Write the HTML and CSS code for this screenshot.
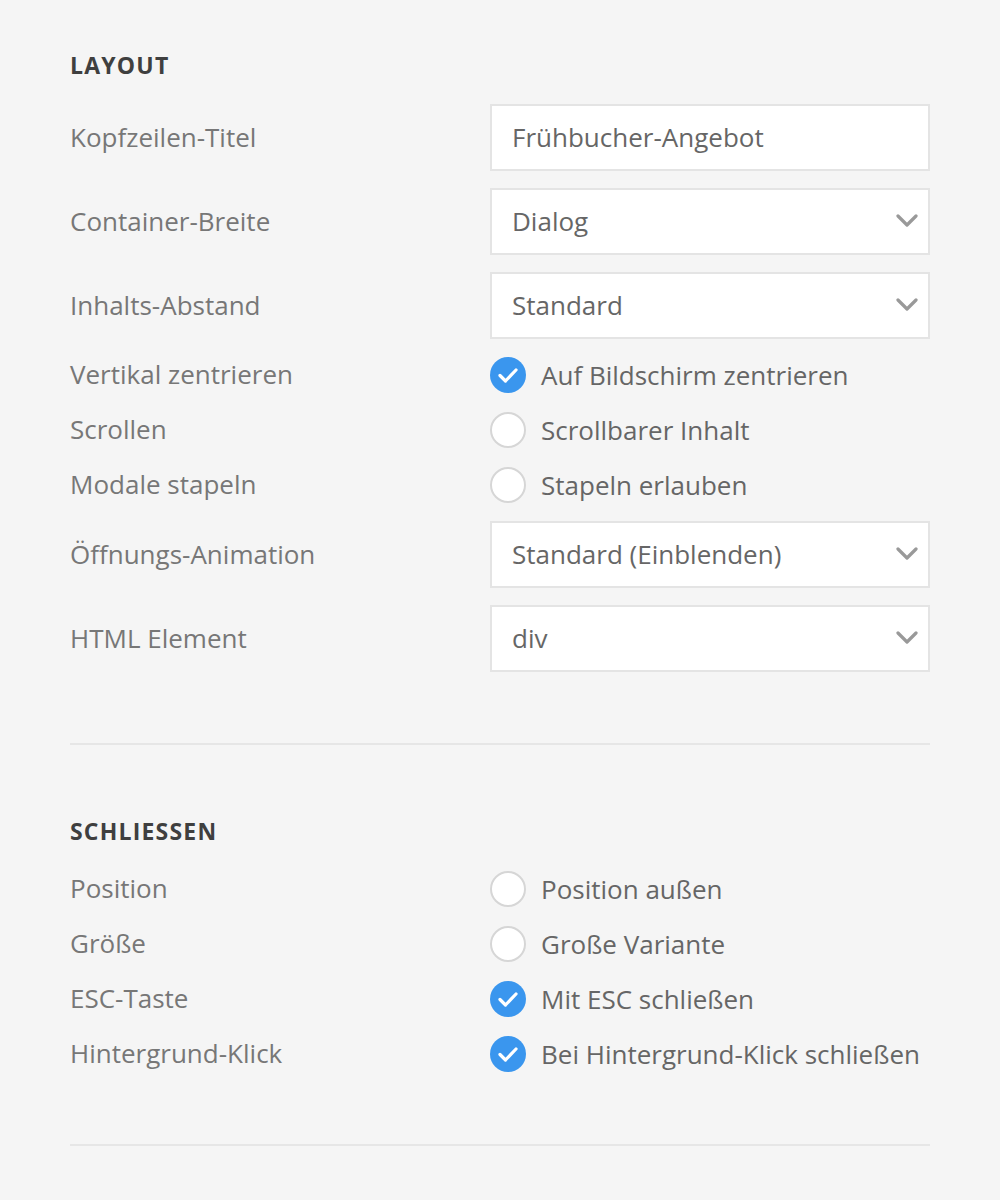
FILE: index.html
```html
<!DOCTYPE html>
<html lang="de">
<head>
<meta charset="utf-8">
<link rel="stylesheet" href="styles.css">
</head>
<body>
<div class="page">
  <section class="section first">
    <h2 class="heading">LAYOUT</h2>
    <div class="rows">
      <div class="row box-row">
        <span class="label">Kopfzeilen-Titel</span>
        <div class="field">Frühbucher-Angebot</div>
      </div>
      <div class="row box-row">
        <span class="label">Container-Breite</span>
        <div class="field select">Dialog<svg class="chev" viewBox="0 0 22 14"><path d="M2 2 L11 11 L20 2"/></svg></div>
      </div>
      <div class="row box-row">
        <span class="label">Inhalts-Abstand</span>
        <div class="field select">Standard<svg class="chev" viewBox="0 0 22 14"><path d="M2 2 L11 11 L20 2"/></svg></div>
      </div>
      <div class="row check-row">
        <span class="label">Vertikal zentrieren</span>
        <div class="check"><span class="box on"><svg viewBox="0 0 36 36"><path d="M10 18.5 L15.5 24 L26 13"/></svg></span>Auf Bildschirm zentrieren</div>
      </div>
      <div class="row check-row">
        <span class="label">Scrollen</span>
        <div class="check"><span class="box"></span>Scrollbarer Inhalt</div>
      </div>
      <div class="row check-row">
        <span class="label">Modale stapeln</span>
        <div class="check"><span class="box"></span>Stapeln erlauben</div>
      </div>
      <div class="row box-row">
        <span class="label">Öffnungs-Animation</span>
        <div class="field select">Standard (Einblenden)<svg class="chev" viewBox="0 0 22 14"><path d="M2 2 L11 11 L20 2"/></svg></div>
      </div>
      <div class="row box-row">
        <span class="label">HTML Element</span>
        <div class="field select">div<svg class="chev" viewBox="0 0 22 14"><path d="M2 2 L11 11 L20 2"/></svg></div>
      </div>
    </div>
  </section>
  <section class="section">
    <h2 class="heading">SCHLIESSEN</h2>
    <div class="rows">
      <div class="row check-row">
        <span class="label">Position</span>
        <div class="check"><span class="box"></span>Position außen</div>
      </div>
      <div class="row check-row">
        <span class="label">Größe</span>
        <div class="check"><span class="box"></span>Große Variante</div>
      </div>
      <div class="row check-row">
        <span class="label">ESC-Taste</span>
        <div class="check"><span class="box on"><svg viewBox="0 0 36 36"><path d="M10 18.5 L15.5 24 L26 13"/></svg></span>Mit ESC schließen</div>
      </div>
      <div class="row check-row">
        <span class="label">Hintergrund-Klick</span>
        <div class="check"><span class="box on"><svg viewBox="0 0 36 36"><path d="M10 18.5 L15.5 24 L26 13"/></svg></span>Bei Hintergrund-Klick schließen</div>
      </div>
    </div>
  </section>
</div>
</body>
</html>
```
FILE: styles.css
```css
html, body {
  margin: 0;
  padding: 0;
  background: #f5f5f5;
}
body {
  font-family: "Open Sans", "Liberation Sans", sans-serif;
  color: #777;
}
.page {
  width: 860px;
  padding: 0 70px;
}
.section {
  padding: 71px 0 71px;
  border-bottom: 2px solid #e6e6e6;
}
.section.first {
  padding-top: 50px;
}
.heading {
  margin: 0 0 24px;
  font-family: "Open Sans", "Liberation Sans", sans-serif;
  font-weight: 700;
  font-size: 23px;
  line-height: 30px;
  color: #3f3f3f;
  letter-spacing: 1.2px;
}
.rows {
  display: flex;
  flex-direction: column;
  gap: 17px;
}
.row {
  display: grid;
  grid-template-columns: 420px 440px;
  align-items: center;
}
.label {
  font-size: 26px;
  line-height: 34px;
  padding-bottom: 2px;
  color: #777;
}
.box-row {
  height: 67px;
}
.check-row {
  height: 38px;
}
.field {
  box-sizing: border-box;
  height: 67px;
  border: 2px solid #e4e4e4;
  background: #fff;
  display: flex;
  align-items: center;
  padding: 0 20px 2px;
  font-size: 26px;
  color: #666;
}
.select {
  justify-content: space-between;
}
.chev {
  width: 22px;
  height: 14px;
  margin-right: -10px;
}
.chev path {
  fill: none;
  stroke: #999;
  stroke-width: 3.2;
  stroke-linecap: round;
  stroke-linejoin: round;
}
.check {
  display: flex;
  align-items: center;
  gap: 15px;
  font-size: 26px;
  color: #666;
  line-height: 34px;
}
.box {
  box-sizing: border-box;
  width: 36px;
  height: 36px;
  border-radius: 50%;
  border: 2px solid #d6d6d6;
  background: #fff;
  flex: none;
  display: flex;
}
.box.on {
  border: none;
  background: #3a96ee;
}
.box svg {
  width: 36px;
  height: 36px;
}
.box svg path {
  fill: none;
  stroke: #fff;
  stroke-width: 3.2;
  stroke-linecap: round;
  stroke-linejoin: round;
}
```
